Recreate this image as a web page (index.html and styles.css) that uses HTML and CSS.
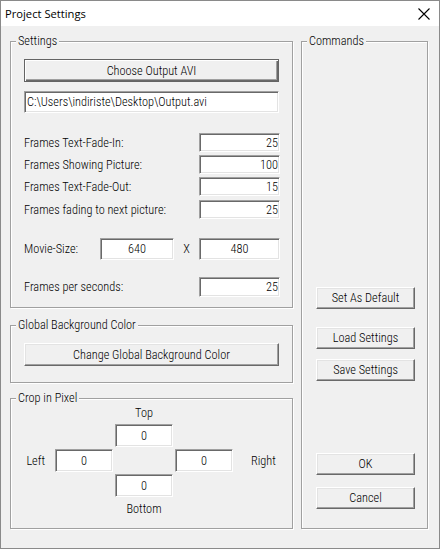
FILE: index.html
```html
<!DOCTYPE html>
<html>
<head>
<meta charset="utf-8">
<title>Project Settings</title>
<link rel="stylesheet" href="styles.css">
</head>
<body>
<div class="window">
  <div class="titlebar">
    <span class="title">Project Settings</span>
    <svg class="close" width="12" height="12" viewBox="0 0 12 12"><path d="M0.5 0.5 L11.5 11.5 M11.5 0.5 L0.5 11.5" stroke="#000" stroke-width="1.1" fill="none"/></svg>
  </div>
  <div class="body">
    <div class="left">
      <div class="group g-settings">
        <span class="legend">Settings</span>
        <div class="btn btn-default btn-wide">Choose Output AVI</div>
        <div class="edit edit-path">C:\Users\indiriste\Desktop\Output.avi</div>
        <div class="rows">
          <div class="row"><span class="lbl">Frames Text-Fade-In:</span><div class="edit num">25</div></div>
          <div class="row"><span class="lbl">Frames Showing Picture:</span><div class="edit num">100</div></div>
          <div class="row"><span class="lbl">Frames Text-Fade-Out:</span><div class="edit num">15</div></div>
          <div class="row r4"><span class="lbl">Frames fading to next picture:</span><div class="edit num">25</div></div>
        </div>
        <div class="row movie">
          <span class="lbl movie-lbl">Movie-Size:</span>
          <div class="edit size">640</div>
          <span class="times">X</span>
          <div class="edit size size-h">480</div>
        </div>
        <div class="row fps"><span class="lbl">Frames per seconds:</span><div class="edit num">25</div></div>
      </div>
      <div class="group g-bg">
        <span class="legend">Global Background Color</span>
        <div class="btn btn-wide">Change Global Background Color</div>
      </div>
      <div class="group g-crop">
        <span class="legend">Crop in Pixel</span>
        <div class="crop">
          <span class="c-top">Top</span>
          <div class="edit cbox b-top">0</div>
          <span class="c-left">Left</span>
          <div class="edit cbox b-left">0</div>
          <div class="edit cbox b-right">0</div>
          <span class="c-right">Right</span>
          <div class="edit cbox b-bottom">0</div>
          <span class="c-bottom">Bottom</span>
        </div>
      </div>
    </div>
    <div class="group g-commands">
      <span class="legend">Commands</span>
      <div class="btn cmd c1">Set As Default</div>
      <div class="btn cmd c2">Load Settings</div>
      <div class="btn cmd c3">Save Settings</div>
      <div class="btn cmd c4">OK</div>
      <div class="btn cmd c5">Cancel</div>
    </div>
  </div>
</div>
</body>
</html>
```
FILE: styles.css
```css
html, body {
  margin: 0;
  padding: 0;
  background: #f0f0f0;
}
.window {
  width: 440px;
  height: 549px;
  box-sizing: border-box;
  border: 1px solid #8a8a8a;
  background: #f0f0f0;
  font-family: "Roboto Condensed", "Liberation Sans", Arial, sans-serif;
  font-weight: 300;
  font-size: 12.3px;
  color: #000;
  display: flex;
  flex-direction: column;
}
.titlebar {
  height: 25px;
  background: #fff;
  display: flex;
  align-items: center;
  justify-content: space-between;
  padding: 0 9px 0 4px;
  flex: none;
}
.title {
  font-family: "Open Sans", "Noto Sans", sans-serif;
  font-weight: 400;
  font-size: 11.2px;
}
.close {
  display: block;
}
.body {
  display: flex;
  align-items: flex-start;
  padding: 15px 0 0 9px;
  gap: 8px;
}
.left {
  display: flex;
  flex-direction: column;
  width: 283px;
}
.group {
  position: relative;
  box-sizing: border-box;
  border: 1px solid #a0a0a0;
  box-shadow: inset 1px 1px 0 #fff, 1px 1px 0 #fff;
}
.legend {
  position: absolute;
  top: -8px;
  left: 5px;
  padding: 0 2px;
  line-height: 14px;
  background: #f0f0f0;
  white-space: nowrap;
}
.g-settings {
  height: 267px;
  padding: 17px 0 0 13px;
}
.g-bg {
  margin-top: 17px;
  height: 58px;
  padding: 17px 0 0 13px;
}
.g-crop {
  margin-top: 15px;
  height: 131px;
}
.g-commands {
  width: 127px;
  height: 488px;
  padding: 0 0 0 14px;
  display: flex;
  flex-direction: column;
}
.btn {
  box-sizing: border-box;
  height: 22px;
  display: flex;
  align-items: center;
  justify-content: center;
  background: #f0f0f0;
  border: 1px solid;
  border-color: #fff #696969 #696969 #fff;
  box-shadow: inset -1px -1px 0 #a0a0a0, inset 1px 1px 0 #e3e3e3;
  white-space: nowrap;
}
.btn-wide {
  width: 255px;
  height: 23px;
}
.btn-default {
  border: 1px solid #646464;
  box-shadow: inset 1px 1px 0 #fff, inset -1px -1px 0 #696969, inset -2px -2px 0 #a0a0a0;
}
.edit {
  box-sizing: border-box;
  background: #fff;
  border: 1px solid;
  border-color: #a0a0a0 #fff #fff #a0a0a0;
  box-shadow: inset 1px 1px 0 #696969, inset -1px -1px 0 #e3e3e3;
  display: flex;
  align-items: center;
  white-space: nowrap;
}
.edit-path {
  width: 255px;
  height: 22px;
  margin-top: 9px;
  padding-left: 2px;
}
.rows {
  margin-top: 20px;
  display: flex;
  flex-direction: column;
  gap: 3px;
}
.row {
  display: flex;
  align-items: center;
  justify-content: space-between;
  width: 256px;
}
.r4 {
  margin-top: 1px;
}
.num {
  width: 81px;
  height: 19px;
  justify-content: flex-end;
  padding-right: 1px;
}
.movie {
  margin-top: 19px;
  justify-content: flex-start;
}
.movie-lbl {
  width: 76px;
}
.size {
  width: 74px;
  height: 22px;
  justify-content: center;
}
.times {
  width: 25px;
  text-align: center;
}
.size-h {
  width: 81px;
}
.fps {
  margin-top: 17px;
}
.fps .num {
  height: 20px;
}
.crop {
  display: grid;
  grid-template-columns: 42px 58px 58px 58px auto;
  grid-template-rows: 19px 23px 23px 23px 19px;
  column-gap: 2px;
  row-gap: 2px;
  padding-top: 4px;
  align-items: center;
}
.cbox {
  height: 23px;
  justify-content: center;
}
.c-top { grid-column: 3; grid-row: 1; text-align: center; }
.b-top { grid-column: 3; grid-row: 2; }
.c-left { grid-column: 1; grid-row: 3; text-align: right; padding-right: 8px; }
.b-left { grid-column: 2; grid-row: 3; }
.b-right { grid-column: 4; grid-row: 3; }
.c-right { grid-column: 5; grid-row: 3; padding-left: 16px; }
.b-bottom { grid-column: 3; grid-row: 4; }
.c-bottom { grid-column: 3; grid-row: 5; text-align: center; }
.cmd {
  width: 99px;
}
.c1 { margin-top: 245px; }
.c2 { margin-top: 18px; }
.c3 { margin-top: 10px; }
.c4 { margin-top: 72px; }
.c5 { margin-top: 12px; }
```
